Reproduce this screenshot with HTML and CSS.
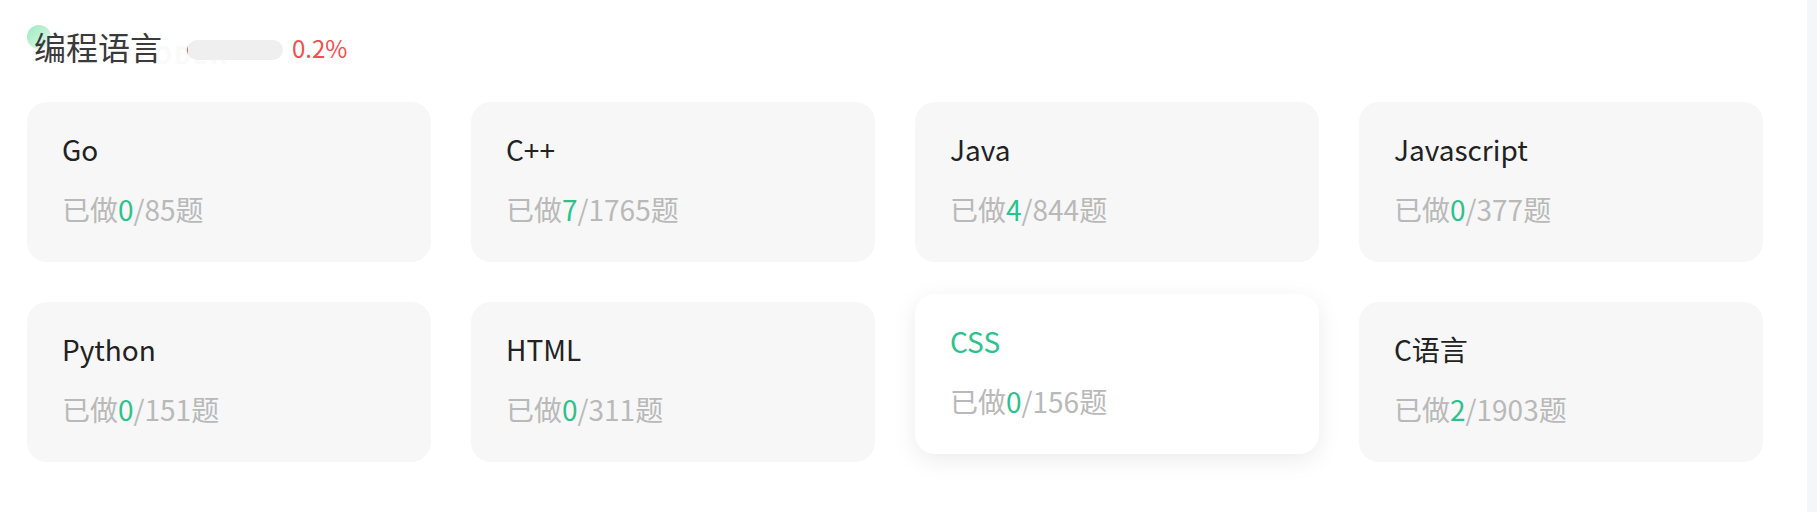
FILE: index.html
```html
<!DOCTYPE html>
<html lang="zh-CN">
<head>
<meta charset="utf-8">
<title>编程语言</title>
<link rel="stylesheet" href="styles.css">
</head>
<body>
<div class="page">
  <main class="main">
    <header class="header">
      <span class="dot"></span>
      <span class="watermark">CODER</span>
      <h1 class="title">编程语言</h1>
      <div class="bar"><div class="bar-fill" style="width:0.2%"></div></div>
      <span class="percent">0.2%</span>
    </header>
    <section class="grid">
      <div class="card"><div class="card-title">Go</div><div class="card-sub">已做<em>0</em>/85题</div></div>
      <div class="card"><div class="card-title">C++</div><div class="card-sub">已做<em>7</em>/1765题</div></div>
      <div class="card"><div class="card-title">Java</div><div class="card-sub">已做<em>4</em>/844题</div></div>
      <div class="card"><div class="card-title">Javascript</div><div class="card-sub">已做<em>0</em>/377题</div></div>
      <div class="card"><div class="card-title">Python</div><div class="card-sub">已做<em>0</em>/151题</div></div>
      <div class="card"><div class="card-title">HTML</div><div class="card-sub">已做<em>0</em>/311题</div></div>
      <div class="card card-active"><div class="card-title">CSS</div><div class="card-sub">已做<em>0</em>/156题</div></div>
      <div class="card"><div class="card-title">C语言</div><div class="card-sub">已做<em>2</em>/1903题</div></div>
    </section>
  </main>
  <div class="scrollbar"></div>
</div>
</body>
</html>
```
FILE: styles.css
```css
* { box-sizing: border-box; }
html, body { margin: 0; padding: 0; background: #fff; }
body {
  font-family: "Noto Sans CJK SC", "Noto Sans", sans-serif;
  height: 512px;
  overflow: hidden;
}
.page { display: flex; height: 512px; }
.main { flex: 1; padding-left: 27px; }
.scrollbar { width: 10px; background: #f5f6f8; }

.header {
  position: relative;
  display: flex;
  align-items: flex-start;
  padding-top: 24px;
  height: 68px;
}
.dot {
  position: absolute;
  left: 0;
  top: 25px;
  width: 24px;
  height: 24px;
  border-radius: 50%;
  background: linear-gradient(135deg, #9beac0 0%, #c6f3da 60%, rgba(230, 250, 238, 0.6) 100%);
}
.watermark {
  position: absolute;
  z-index: 0;
  left: 110px;
  top: 40px;
  font-size: 24px;
  line-height: 28px;
  font-weight: 700;
  color: #fafafa;
  letter-spacing: 2px;
}
.title {
  position: relative;
  z-index: 1;
  margin: 0 0 0 7px;
  font-size: 32px;
  line-height: 44px;
  font-weight: 400;
  color: #3a3a3a;
}
.bar {
  position: relative;
  z-index: 1;
  margin: 16px 0 0 25px;
  width: 96px;
  height: 20px;
  border-radius: 10px;
  background: #efefef;
  overflow: hidden;
}
.bar-fill { height: 100%; background: #f44d4d; }
.percent {
  margin: 12px 0 0 9px;
  font-size: 24px;
  line-height: 24px;
  color: #f44d4d;
}

.grid {
  margin-top: 34px;
  display: grid;
  grid-template-columns: repeat(4, 404px);
  column-gap: 40px;
  row-gap: 40px;
}
.card {
  height: 160px;
  padding: 27px 35px;
  border-radius: 20px;
  background: #f7f7f7;
}
.card-title {
  font-size: 28px;
  line-height: 40px;
  color: #222;
}
.card-sub {
  margin-top: 20px;
  font-size: 28px;
  line-height: 40px;
  color: #b9b9b9;
}
.card-sub em { font-style: normal; color: #2cc28e; }
.card-active {
  background: #fff;
  transform: translateY(-8px);
  box-shadow: 0 6px 24px rgba(0, 0, 0, 0.08);
}
.card-active .card-title { color: #2cc28e; }
```
